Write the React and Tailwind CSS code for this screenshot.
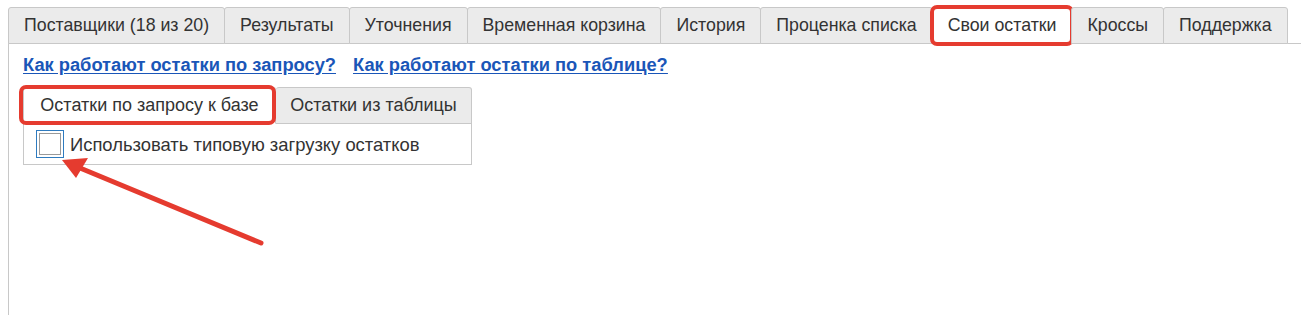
export default function App() {
  const tabs = [
    'Поставщики (18 из 20)',
    'Результаты',
    'Уточнения',
    'Временная корзина',
    'История',
    'Проценка списка',
    'Свои остатки',
    'Кроссы',
    'Поддержка',
  ];
  const active = 'Свои остатки';

  return (
    <div
      className="relative w-[1301px] h-[335px] bg-white text-[#333] overflow-hidden"
      style={{ fontFamily: '"Liberation Sans", Arial, sans-serif' }}
    >
      <div className="pl-2 pt-[7px]">
        {/* верхние вкладки */}
        <div className="flex border-b border-[#c8c8c8] h-[37px]">
          {tabs.map((t) => (
            <div
              key={t}
              className={
                'relative shrink-0 whitespace-nowrap h-[37px] px-[15px] flex items-center text-[17.75px] border border-[#c8c8c8] -ml-px first:ml-0 rounded-t-[3px] ' +
                (t === active ? 'bg-white border-b-white' : 'bg-[#ebebeb]')
              }
            >
              {t}
              {t === active && (
                <div className="absolute -left-[3px] -right-[3px] -top-[3px] -bottom-[3px] border-4 border-[#e53b2f] rounded-[7px]" />
              )}
            </div>
          ))}
        </div>

        {/* содержимое */}
        <div className="border-l border-[#c8c8c8] h-[271px] pl-[14px]">
          <div className="flex gap-[17px] pt-[7px] text-[18.3px] font-bold text-[#1a56b8] underline underline-offset-2 whitespace-nowrap">
            <a href="#">Как работают остатки по запросу?</a>
            <a href="#">Как работают остатки по таблице?</a>
          </div>

          <div className="mt-[9px] w-[449px]">
            <div className="flex h-[37px] border-b border-[#c8c8c8]">
              <div className="relative h-[37px] w-[253px] flex items-center justify-center whitespace-nowrap text-[18px] bg-white border border-[#c8c8c8] border-b-white rounded-t-[3px]">
                Остатки по запросу к базе
                <div className="absolute -left-[5px] -right-[1px] -top-[3px] -bottom-[2px] border-4 border-[#e53b2f] rounded-[7px]" />
              </div>
              <div className="h-[37px] flex-1 flex items-center justify-center whitespace-nowrap text-[18px] bg-[#ebebeb] border border-[#c8c8c8] border-l-0 rounded-t-[3px]">
                Остатки из таблицы
              </div>
            </div>
            <div className="h-[41px] border border-t-0 border-[#c8c8c8] flex items-center pl-[12px]">
              <div className="w-[28px] h-[28px] border border-[#2f7bbf] flex items-center justify-center">
                <div className="w-[22px] h-[22px] border border-[#9a9a9a] bg-white" />
              </div>
              <span className="ml-[6px] text-[18.4px] whitespace-nowrap">Использовать типовую загрузку остатков</span>
            </div>
          </div>
        </div>
      </div>

      {/* стрелка */}
      <svg className="absolute left-0 top-0 pointer-events-none" width="1301" height="335">
        <line x1="261" y1="243" x2="80" y2="168" stroke="#e53b2f" strokeWidth="5" strokeLinecap="round" />
        <polygon points="62,160 88,158 76,178" fill="#e53b2f" />
      </svg>
    </div>
  );
}
